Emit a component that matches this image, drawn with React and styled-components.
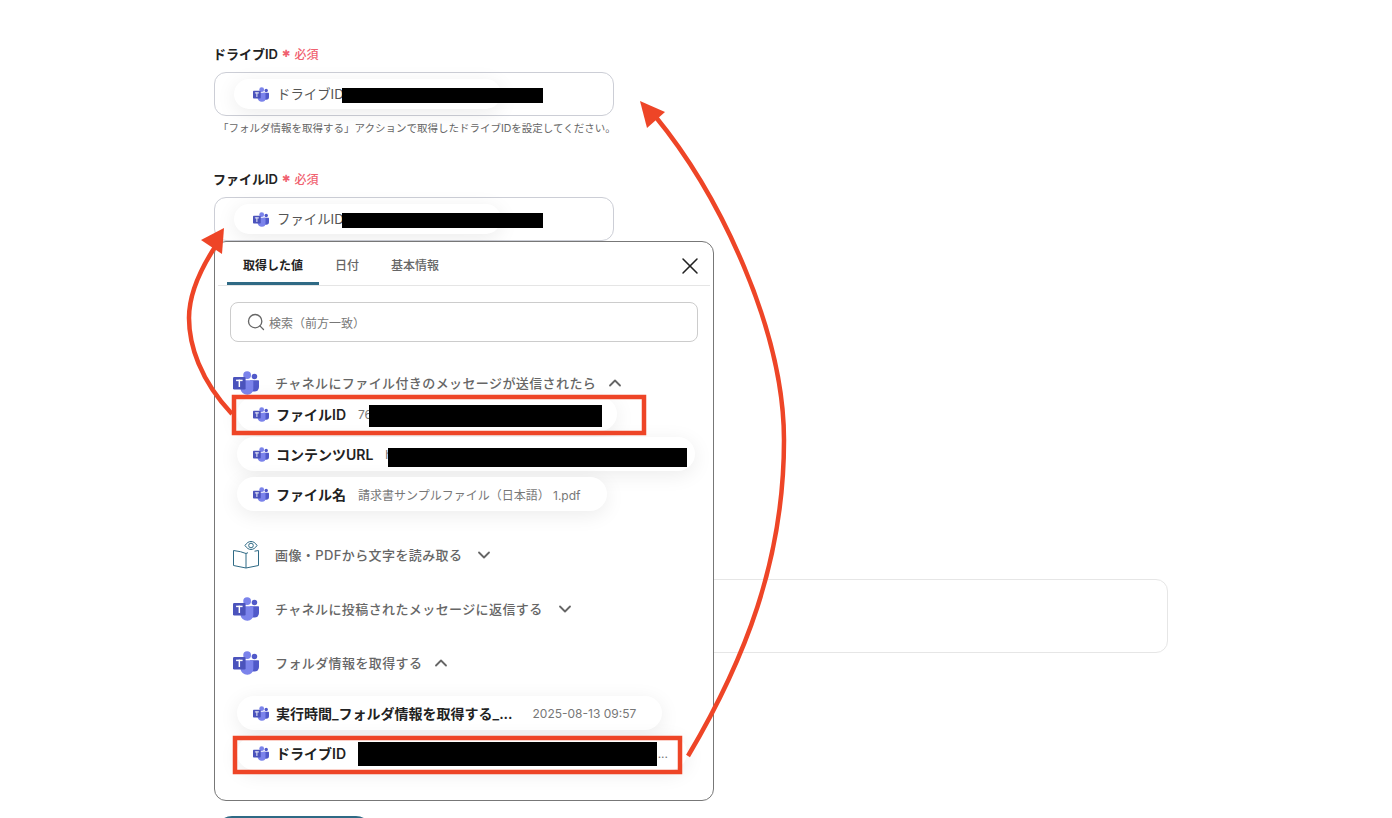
import React from "react";
import styled, { createGlobalStyle } from "styled-components";
import { ChevronDown, ChevronUp, Search, X } from "lucide-react";

const GlobalStyle = createGlobalStyle`
  html, body {
    margin: 0;
    padding: 0;
    background: #fff;
    overflow: hidden;
  }
  body {
    font-family: Inter, "Noto Sans CJK JP", "Noto Sans", sans-serif;
    color: #222;
  }
  * {
    box-sizing: border-box;
  }
`;

const TeamsIcon = ({ size = 16 }) => (
  <TeamsSvg viewBox="0 0 32 29" $size={size}>
    <circle cx="26.4" cy="6.6" r="3.4" fill="#5059c9" />
    <path d="M21 11h10a1 1 0 0 1 1 1v7.5a5.5 5.5 0 0 1-5.5 5.5H21z" fill="#5059c9" />
    <circle cx="17.4" cy="4.8" r="4.8" fill="#7b83eb" />
    <path d="M9 11h15a1 1 0 0 1 1 1v10a7 7 0 0 1-7 7 8.500 8.500 0 0 1-9-8z" fill="#7b83eb" />
    <rect x="0" y="7" width="15.500" height="15.500" rx="1.500" fill="#4b53bc" />
    <rect x="3.800" y="10.400" width="8" height="1.800" fill="#fff" />
    <rect x="6.900" y="10.400" width="1.800" height="9" fill="#fff" />
  </TeamsSvg>
);

const BookIcon = () => (
  <BookSvg viewBox="0 0 28 28" fill="none" stroke="#2f6a85" strokeWidth="1">
    <path d="M14 12.500v14.500L1.500 24.500V9.500l7 1.200 5.500 1.800z" />
    <path d="M14 12.500l2-.8M14 27l12.500-2.500V9.500l-4 .7" />
    <path d="M13 4.500c1.800-2.800 3.800-4 6-4s4.300 1.200 6 4c-1.700 2.700-3.800 4-6 4s-4.200-1.300-6-4z" />
    <circle cx="19" cy="4.500" r="2.300" />
  </BookSvg>
);

function FormField({ label, chipText, help, children }) {
  return (
    <FieldBlock>
      <LabelRow>
        <FieldLabel>{label}</FieldLabel>
        <Asterisk>✱</Asterisk>
        <Required>必須</Required>
      </LabelRow>
      <FieldBox>
        <FieldChip>
          <TeamsIcon />
          <FieldChipText>{chipText}</FieldChipText>
          <Redacted $left={108} $top={9} $width={201} $height={15} />
        </FieldChip>
      </FieldBox>
      {help && <HelpText>{help}</HelpText>}
      {children}
    </FieldBlock>
  );
}

function ValueChip({ label, value, width, gap, redact, endDots }) {
  return (
    <Chip $width={width}>
      <TeamsIcon />
      <ChipLabel>{label}</ChipLabel>
      <ChipValue $gap={gap} $endDots={endDots}>
        {value}
      </ChipValue>
      {redact && <Redacted {...redact} />}
    </Chip>
  );
}

function SourceHeader({ icon, title, open, top }) {
  return (
    <SectionHeader $top={top}>
      <SectionIcon>{icon}</SectionIcon>
      <SectionTitle $open={open}>{title}</SectionTitle>
      {open ? (
        <ChevronUp size={20} strokeWidth={2.2} color="#666" />
      ) : (
        <ChevronDown size={20} strokeWidth={2.2} color="#666" />
      )}
    </SectionHeader>
  );
}

function App() {
  return (
    <Page>
      <GlobalStyle />
      <FormField
        label="ドライブID"
        chipText="ドライブID"
        help="「フォルダ情報を取得する」アクションで取得したドライブIDを設定してください。"
      />
      <FormField label="ファイルID" chipText="ファイルID">
        <Popover>
          <TabRow>
            <Tab $active>取得した値</Tab>
            <Tab>日付</Tab>
            <Tab>基本情報</Tab>
            <CloseButton>
              <X size={28} strokeWidth={1.3} color="#222" />
            </CloseButton>
          </TabRow>
          <PopoverBody>
            <SearchBox>
              <Search size={20} strokeWidth={1.6} color="#666" />
              <span>検索（前方一致）</span>
            </SearchBox>

            <SourceHeader
              top={27}
              icon={<TeamsIcon size={26} />}
              title="チャネルにファイル付きのメッセージが送信されたら"
              open
            />
            <ChipList>
              <ValueChip
                label="ファイルID"
                value="76"
                width={380}
                redact={{ $left: 132, $top: 8, $width: 233, $height: 22 }}
              />
              <ValueChip
                label="コンテンツURL"
                value="h"
                width={458}
                redact={{ $left: 151, $top: 11, $width: 299, $height: 19 }}
              />
              <ValueChip label="ファイル名" value="請求書サンプルファイル（日本語） 1.pdf" />
            </ChipList>

            <SourceHeader top={30} icon={<BookIcon />} title="画像・PDFから文字を読み取る" />
            <SourceHeader
              top={26}
              icon={<TeamsIcon size={26} />}
              title="チャネルに投稿されたメッセージに返信する"
            />
            <SourceHeader top={26} icon={<TeamsIcon size={26} />} title="フォルダ情報を取得する" open />

            <ChipList $top={19}>
              <ValueChip
                label="実行時間_フォルダ情報を取得する_..."
                value="2025-08-13 09:57"
                gap={20}
              />
              <ValueChip
                label="ドライブID"
                value="..."
                width={450}
                endDots
                redact={{ $left: 121, $top: 6, $width: 299, $height: 24 }}
              />
            </ChipList>
          </PopoverBody>
        </Popover>
      </FormField>

      <NoteArea />
      <SubmitButton />

      <Annotations viewBox="0 0 1392 818">
        <rect x="234" y="397" width="410" height="36" />
        <rect x="235" y="738" width="445" height="34" />
        <path d="M688 756C745 660 784 560 784 440C784 330 720 195 655 116" />
        <path d="M232 414C200 380 189 345 189 318C189 295 200 270 215 247" />
        <polygon points="640,101 665,112 647,128" />
        <polygon points="224,228 201,240 222,254" />
      </Annotations>
    </Page>
  );
}

export default App;

const Page = styled.div`
  position: relative;
  width: 1392px;
  height: 818px;
  overflow: hidden;
  padding: 45px 0 0 214px;
`;

const FieldBlock = styled.div`
  position: relative;
  width: 400px;
  margin-bottom: 33px;

  &:nth-of-type(2) {
    margin-bottom: 0;
  }
`;

const LabelRow = styled.div`
  display: flex;
  align-items: center;
  height: 16px;
  margin-bottom: 11px;
  margin-left: -1px;
`;

const FieldLabel = styled.span`
  font-size: 13px;
  font-weight: 600;
  color: #222;
`;

const Asterisk = styled.span`
  margin-left: 4px;
  font-family: "DejaVu Sans", sans-serif;
  font-size: 10px;
  line-height: 16px;
  padding-top: 2px;
  color: #f0616f;
`;

const Required = styled.span`
  margin-left: 4px;
  font-size: 12px;
  font-weight: 500;
  color: #f0616f;
`;

const FieldBox = styled.div`
  height: 44px;
  padding: 6px 19px;
  border: 1px solid #ccced6;
  border-radius: 12px;
  background: #fff;
`;

const FieldChip = styled.div`
  position: relative;
  display: flex;
  align-items: center;
  gap: 8px;
  width: 267px;
  height: 30px;
  padding-left: 19px;
  border-radius: 15px;
  background: #fff;
  box-shadow: 0 4px 20px rgba(0, 0, 0, 0.08);
  font-size: 13.4px;
  color: #555;
`;

const FieldChipText = styled.span`
  margin-top: -2px;
`;

const HelpText = styled.div`
  margin: 5px 0 0 4px;
  height: 16px;
  font-size: 10.5px;
  line-height: 16px;
  color: #666;
  white-space: nowrap;
`;

const Redacted = styled.div`
  position: absolute;
  left: ${(props) => props.$left}px;
  top: ${(props) => props.$top}px;
  width: ${(props) => props.$width}px;
  height: ${(props) => props.$height}px;
  background: #000;
`;

const Popover = styled.div`
  position: absolute;
  top: 71px;
  left: 0;
  z-index: 2;
  width: 500px;
  height: 560px;
  border: 1px solid #777;
  border-radius: 12px;
  background: #fff;
`;

const TabRow = styled.div`
  display: flex;
  align-items: stretch;
  height: 44px;
  margin: 0 3px;
  padding-left: 9px;
  border-bottom: 1px solid #e5e5e5;
`;

const Tab = styled.div`
  display: flex;
  align-items: center;
  height: 43px;
  padding: 4px 16px 0;
  font-size: 12px;
  font-weight: ${(props) => (props.$active ? 600 : 500)};
  color: ${(props) => (props.$active ? "#222" : "#666")};
  border-bottom: 3px solid ${(props) => (props.$active ? "#2f6a85" : "transparent")};
  border-radius: 3px 3px 0 0;
`;

const CloseButton = styled.div`
  display: flex;
  align-items: center;
  margin: 5px 6px 0 auto;
`;

const PopoverBody = styled.div`
  padding: 16px 15px 0;
`;

const SearchBox = styled.div`
  display: flex;
  align-items: center;
  gap: 3px;
  height: 40px;
  padding-left: 15px;
  border: 1px solid #ccc;
  border-radius: 8px;
  font-size: 12px;
  color: #777;
`;

const SectionHeader = styled.div`
  display: flex;
  align-items: center;
  height: 28px;
  margin-top: ${(props) => props.$top}px;
`;

const SectionIcon = styled.div`
  display: flex;
  align-items: center;
  width: 45px;
  padding-left: 3px;
`;

const SectionTitle = styled.span`
  margin-right: ${(props) => (props.$open ? 9 : 12)}px;
  margin-top: -2px;
  font-size: 13px;
  letter-spacing: 0.4px;
  font-weight: 500;
  color: #666;
`;

const ChipList = styled.div`
  display: flex;
  flex-direction: column;
  align-items: flex-start;
  gap: 6px;
  margin: ${(props) => props.$top || 0}px 0 0 7px;
`;

const Chip = styled.div`
  position: relative;
  display: flex;
  align-items: center;
  gap: 7px;
  width: ${(props) => (props.$width ? `${props.$width}px` : "fit-content")};
  height: 34px;
  padding: 0 26px 0 16px;
  border-radius: 17px;
  background: #fff;
  box-shadow: 0 4px 20px rgba(0, 0, 0, 0.08);
`;

const ChipLabel = styled.span`
  white-space: nowrap;
  font-size: 14px;
  font-weight: 600;
  color: #222;
`;

const ChipValue = styled.span`
  margin-left: ${(props) => (props.$endDots ? "auto" : `${(props.$gap || 12) - 7}px`)};
  margin-right: ${(props) => (props.$endDots ? "-7px" : 0)};
  white-space: nowrap;
  font-size: 12px;
  color: #777;
`;

const TeamsSvg = styled.svg`
  flex: none;
  width: ${(props) => props.$size}px;
  height: ${(props) => Math.round((props.$size * 29) / 32)}px;
`;

const BookSvg = styled.svg`
  flex: none;
  width: 28px;
  height: 28px;
  margin-left: -1px;
`;

const NoteArea = styled.div`
  width: 954px;
  height: 74px;
  margin-top: 338px;
  border: 1px solid #e6e6e6;
  border-radius: 12px;
`;

const SubmitButton = styled.div`
  width: 156px;
  height: 40px;
  margin: 163px 0 0 2px;
  border-radius: 16px;
  background: #2f6a85;
`;

const Annotations = styled.svg`
  position: absolute;
  top: 0;
  left: 0;
  z-index: 5;
  width: 1392px;
  height: 818px;
  pointer-events: none;
  fill: none;
  stroke: #ee4527;
  stroke-width: 4.5;

  polygon {
    fill: #ee4527;
    stroke: none;
  }
`;
